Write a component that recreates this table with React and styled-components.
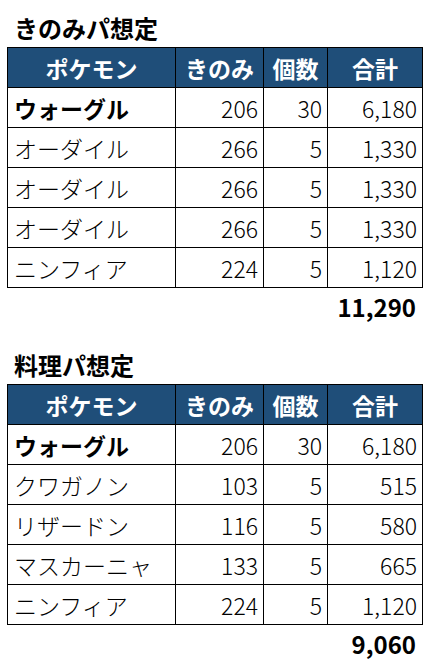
import React from "react"
import styled, { createGlobalStyle } from "styled-components"

const GlobalStyle = createGlobalStyle`
  body {
    margin: 0;
    background: #fff;
    font-family: "Noto Sans CJK JP", "Noto Sans", sans-serif;
    color: #000;
  }
`

const Page = styled.div`
  width: 427px;
  padding: 8px 5px 0 7px;
  box-sizing: border-box;
`

const Title = styled.h2`
  margin: ${props => props.first ? "0" : "17px 0 0"};
  padding-left: 7px;
  height: 39px;
  line-height: 39px;
  font-size: 24px;
  font-weight: 700;
`

const Table = styled.table`
  width: 415px;
  border-collapse: collapse;
  table-layout: fixed;
`

const HeadCell = styled.th`
  background: #1f4e79;
  color: #fff;
  font-size: 23px;
  font-weight: 700;
  text-align: center;
  border: 1px solid #000;
  height: 39px;
  padding: 0;
`

const Cell = styled.td`
  border: 1px solid #000;
  height: 39px;
  padding: ${props => props.num ? "0 5px 0 0" : "0 0 0 6px"};
  text-align: ${props => props.num ? "right" : "left"};
  font-size: 23px;
  font-weight: ${props => props.bold ? 700 : 300};
  white-space: nowrap;
`

const Total = styled.div`
  height: 40px;
  line-height: 38px;
  text-align: right;
  padding-right: 6px;
  font-size: 24px;
  font-weight: 700;
`

const berryParty = [
  { name: "ウォーグル", berry: "206", count: "30", sum: "6,180", bold: true },
  { name: "オーダイル", berry: "266", count: "5", sum: "1,330" },
  { name: "オーダイル", berry: "266", count: "5", sum: "1,330" },
  { name: "オーダイル", berry: "266", count: "5", sum: "1,330" },
  { name: "ニンフィア", berry: "224", count: "5", sum: "1,120" },
]

const cookingParty = [
  { name: "ウォーグル", berry: "206", count: "30", sum: "6,180", bold: true },
  { name: "クワガノン", berry: "103", count: "5", sum: "515" },
  { name: "リザードン", berry: "116", count: "5", sum: "580" },
  { name: "マスカーニャ", berry: "133", count: "5", sum: "665" },
  { name: "ニンフィア", berry: "224", count: "5", sum: "1,120" },
]

const PartyTable = ({ rows }) => (
  <Table>
    <colgroup>
      <col style={{ width: 168 }} />
      <col style={{ width: 88 }} />
      <col style={{ width: 64 }} />
      <col style={{ width: 95 }} />
    </colgroup>
    <thead>
      <tr>
        <HeadCell>ポケモン</HeadCell>
        <HeadCell>きのみ</HeadCell>
        <HeadCell>個数</HeadCell>
        <HeadCell>合計</HeadCell>
      </tr>
    </thead>
    <tbody>
      {rows.map((r, i) => (
        <tr key={i}>
          <Cell bold={r.bold}>{r.name}</Cell>
          <Cell num>{r.berry}</Cell>
          <Cell num>{r.count}</Cell>
          <Cell num>{r.sum}</Cell>
        </tr>
      ))}
    </tbody>
  </Table>
)

const App = () => (
  <Page>
    <GlobalStyle />
    <Title first>きのみパ想定</Title>
    <PartyTable rows={berryParty} />
    <Total>11,290</Total>
    <Title>料理パ想定</Title>
    <PartyTable rows={cookingParty} />
    <Total>9,060</Total>
  </Page>
)

export default App
